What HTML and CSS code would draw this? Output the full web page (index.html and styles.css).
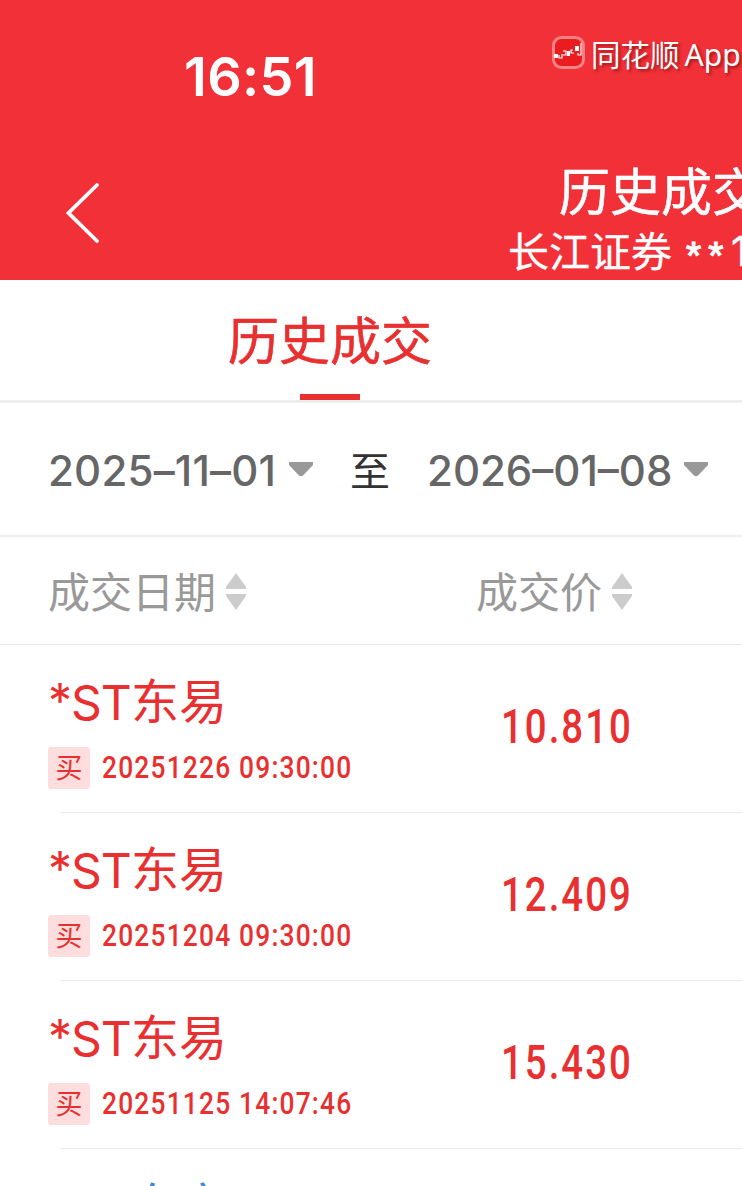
FILE: index.html
```html
<!DOCTYPE html>
<html lang="zh-CN">
<head>
    <meta charset="UTF-8">
    <meta name="viewport" content="width=device-width, initial-scale=1.0">
    <title>历史成交</title>
    <link rel="stylesheet" href="styles.css">
</head>
<body>
    <div class="screen">
        <header class="header">
            <div class="status-bar">
                <span class="time">16:51</span>
                <div class="brand">
                    <svg class="brand-icon" width="34" height="34" viewBox="0 0 34 34">
                        <rect x="1.500" y="1.500" width="30" height="30" rx="8" fill="#e91c1f" stroke="#f78285" stroke-width="3"/>
                        <path d="M7 19v3h3v-4M11 15h3v4h-3M21 14h-2v3h3M29 7v12h-3v-2" fill="none" stroke="#fff" stroke-width="1.200"/>
                        <path d="M2 18h4v4H2zM15 15h3v5h-3zM23 10h4v5h-4z" fill="#fff"/>
                    </svg>
                    <span class="brand-name">同花顺</span>
                    <span class="brand-app">App</span>
                </div>
            </div>
            <div class="nav">
                <svg class="back" width="36" height="62" viewBox="0 0 36 62">
                    <path d="M33 3L4.500 31L33 59" fill="none" stroke="#fff" stroke-width="3.800" stroke-linecap="round"/>
                </svg>
                <div class="nav-title">
                    <h1>历史成交</h1>
                    <p>长江证券 <span class="mask">**</span><span class="account">1</span></p>
                </div>
            </div>
        </header>

        <div class="tabs">
            <div class="tab active">历史成交</div>
        </div>

        <div class="filter">
            <span class="date date-from">2025–11–01</span>
            <svg class="caret" width="24" height="15" viewBox="0 0 24 15"><path d="M0 0h24v3L14 13.500q-2 1.500-4 0L0 3z" fill="#999"/></svg>
            <span class="to">至</span>
            <span class="date date-to">2026–01–08</span>
            <svg class="caret" width="24" height="15" viewBox="0 0 24 15"><path d="M0 0h24v3L14 13.500q-2 1.500-4 0L0 3z" fill="#999"/></svg>
        </div>

        <div class="columns">
            <div class="col-date">成交日期
                <svg class="sort" width="20" height="38" viewBox="0 0 20 38"><path d="M10 0L20 14v2H0v-2z" fill="#ccc"/><path d="M0 21h20v2L10 37L0 23z" fill="#ccc"/></svg>
            </div>
            <div class="col-price">成交价
                <svg class="sort" width="20" height="38" viewBox="0 0 20 38"><path d="M10 0L20 14v2H0v-2z" fill="#ccc"/><path d="M0 21h20v2L10 37L0 23z" fill="#ccc"/></svg>
            </div>
        </div>

        <div class="list">
            <div class="row">
                <div class="stock">
                    <div class="name"><span class="star">*</span><span class="st">ST</span>东易</div>
                    <div class="meta"><span class="tag">买</span><span class="datetime">20251226 09:30:00</span></div>
                </div>
                <div class="price"><span>10.810</span></div>
            </div>
            <div class="row">
                <div class="stock">
                    <div class="name"><span class="star">*</span><span class="st">ST</span>东易</div>
                    <div class="meta"><span class="tag">买</span><span class="datetime">20251204 09:30:00</span></div>
                </div>
                <div class="price"><span>12.409</span></div>
            </div>
            <div class="row">
                <div class="stock">
                    <div class="name"><span class="star">*</span><span class="st">ST</span>东易</div>
                    <div class="meta"><span class="tag">买</span><span class="datetime">20251125 14:07:46</span></div>
                </div>
                <div class="price"><span>15.430</span></div>
            </div>
            <div class="row sell">
                <div class="stock">
                    <div class="name"><span class="star">*</span><span class="st">ST</span>东方</div>
                </div>
            </div>
        </div>
    </div>
</body>
</html>
```
FILE: styles.css
```css
* {
    box-sizing: border-box;
}
body {
    margin: 0;
    background: #fff;
    font-family: Inter, "Noto Sans CJK SC", sans-serif;
    color: #333;
}
.screen {
    width: 742px;
    height: 1186px;
    overflow: hidden;
    white-space: nowrap;
}
.header {
    height: 280px;
    background: #f23038;
    color: #fff;
    overflow: hidden;
}
.status-bar {
    display: flex;
    height: 160px;
    padding-left: 184px;
}
.time {
    width: 368px;
    padding-top: 42px;
    font-size: 54px;
    line-height: 70px;
    font-weight: 600;
    letter-spacing: 0.3px;
}
.brand {
    display: flex;
    padding-top: 36px;
}
.brand-icon {
    flex: none;
}
.brand-name,
.brand-app {
    line-height: 38px;
    text-shadow: 2px 2px 3px rgba(80, 0, 0, 0.5);
}
.brand-name {
    margin-left: 5px;
    font-size: 29.5px;
}
.brand-app {
    margin-left: 5px;
    font-family: "Noto Sans", sans-serif;
    font-size: 30px;
}
.nav {
    display: flex;
    height: 120px;
}
.back {
    flex: none;
    margin: 22px 0 0 64px;
}
.nav-title {
    margin-left: 408px;
}
.nav-title h1 {
    margin: 2px 0 0 51px;
    font-size: 51px;
    line-height: 62px;
    font-weight: 400;
    -webkit-text-stroke: 0.6px;
}
.nav-title p {
    display: flex;
    margin: 0;
    font-size: 41px;
    line-height: 56px;
    -webkit-text-stroke: 0.3px;
}
.mask {
    width: 47px;
    margin-left: 14px;
    padding-top: 4px;
    font-family: "Liberation Sans", sans-serif;
    font-size: 39px;
    letter-spacing: 7px;
    -webkit-text-stroke: 1.2px;
}
.account {
    margin-left: -2px;
    margin-top: -1px;
}
.tabs {
    height: 123px;
    padding-left: 228px;
    border-bottom: 3px solid #eee;
}
.tab {
    display: flex;
    flex-direction: column;
    justify-content: space-between;
    align-items: center;
    width: 204px;
    height: 120px;
    font-size: 51px;
    line-height: 124px;
    font-weight: 400;
    -webkit-text-stroke: 0.6px;
}
.tab.active {
    color: #e93030;
}
.tab.active::after {
    content: "";
    width: 60px;
    height: 6px;
    margin-top: -10px;
    background: #e93030;
}
.filter {
    display: flex;
    align-items: center;
    height: 134px;
    padding-left: 48px;
    border-bottom: 2px solid #eee;
}
.date {
    padding-top: 2px;
    font-size: 42px;
    font-weight: 500;
    color: #666;
}
.date-from {
    width: 241px;
    letter-spacing: 0.2px;
}
.date-to {
    width: 257px;
}
.caret {
    flex: none;
}
.to {
    width: 77px;
    margin-left: 37px;
    font-size: 40px;
}
.columns {
    display: flex;
    height: 108px;
    padding-left: 48px;
    border-bottom: 1px solid #e8e8e8;
    font-size: 42px;
    line-height: 110px;
    color: #999;
}
.col-date,
.col-price {
    display: flex;
    align-items: center;
    gap: 10px;
    padding-top: 5px;
}
.sort {
    margin-top: -2px;
}
.col-date {
    width: 428px;
}
.row {
    display: flex;
    height: 168px;
    padding-left: 48px;
    color: #e93030;
    background: linear-gradient(#ebebeb, #ebebeb) 60px 100% / 100% 1px no-repeat;
}
.stock {
    width: 453px;
}
.name {
    display: flex;
    height: 102px;
    padding-top: 21px;
    font-size: 48px;
    line-height: 72px;
}
.star {
    width: 23px;
    margin-top: -1px;
}
.st {
    width: 60px;
    margin-top: 1px;
    letter-spacing: -1px;
}
.meta {
    display: flex;
    align-items: center;
}
.tag {
    width: 42px;
    height: 42px;
    border-radius: 3px;
    background: #fddddd;
    font-size: 27px;
    line-height: 43px;
    text-align: center;
}
.datetime {
    margin: -2px 0 0 12px;
    font-family: Roboto, sans-serif;
    font-size: 31px;
    font-weight: 500;
    letter-spacing: 1.4px;
    transform: scaleX(0.85);
    transform-origin: left;
}
.price span {
    display: inline-block;
    font-family: Roboto, sans-serif;
    font-size: 48px;
    line-height: 164px;
    font-weight: 500;
    letter-spacing: 2.5px;
    transform: scaleX(0.8);
    transform-origin: left;
}
.sell {
    color: #4385d6;
}
```
